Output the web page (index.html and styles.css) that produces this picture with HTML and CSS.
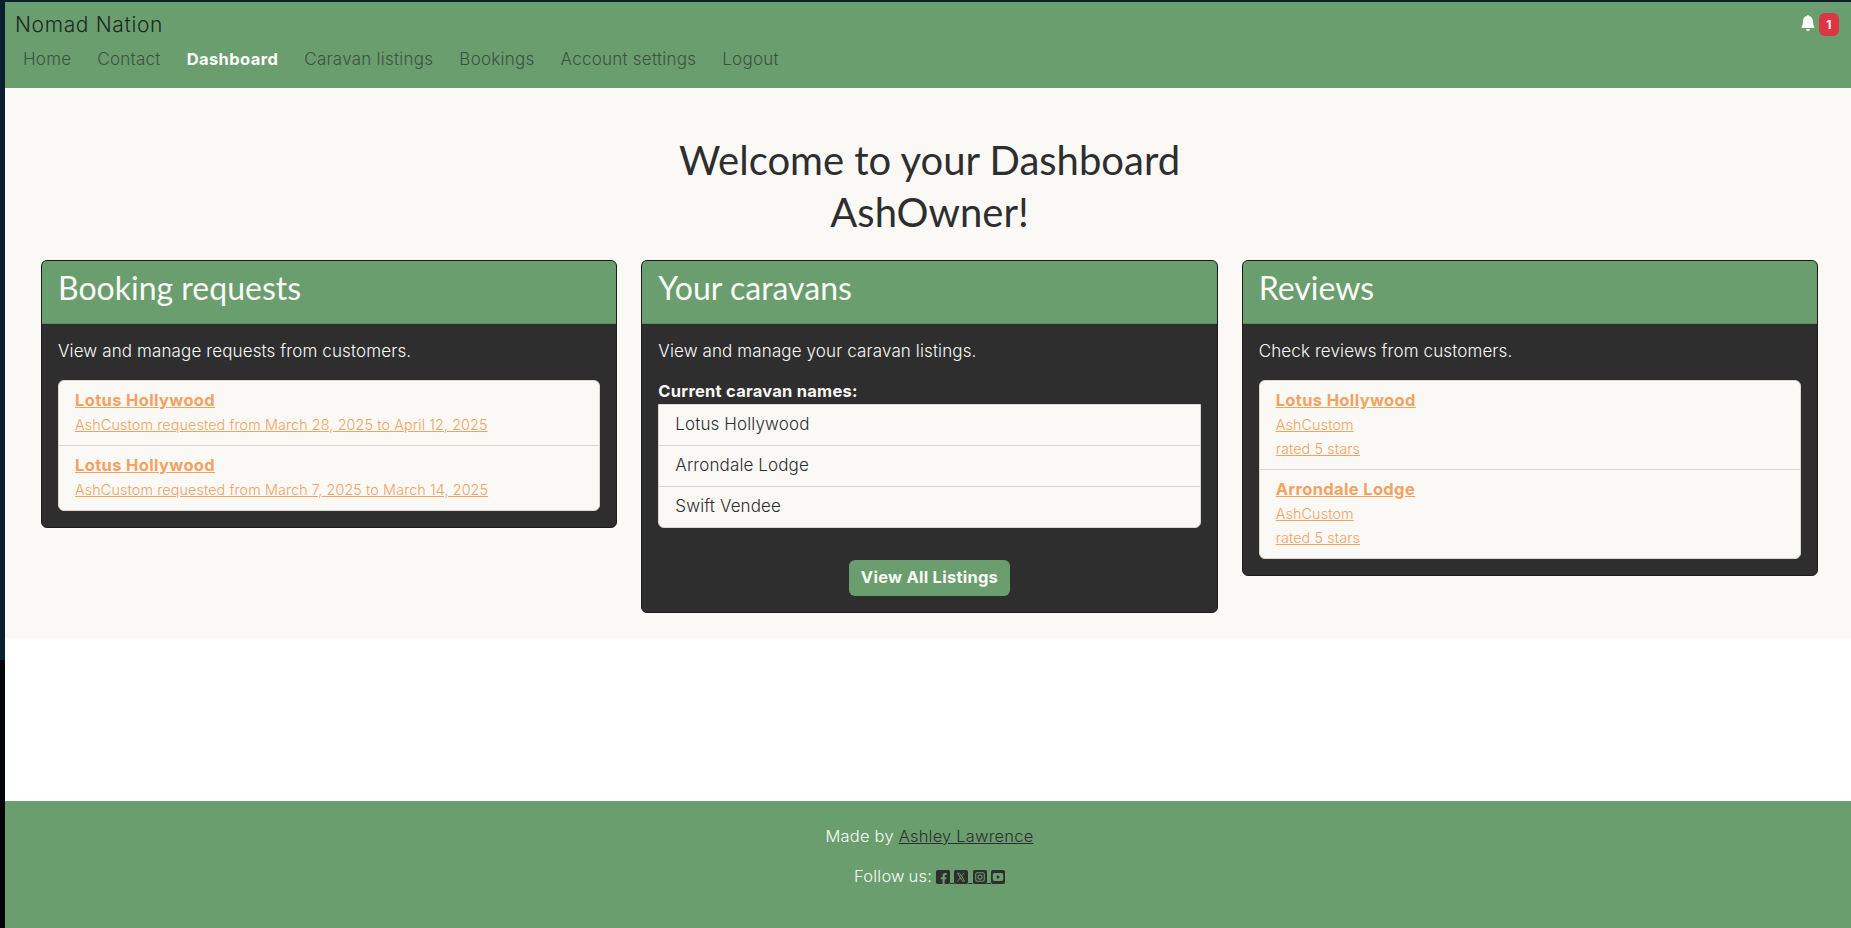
FILE: index.html
```html
<!DOCTYPE html>
<html lang="en">
<head>
  <meta charset="UTF-8" />
  <meta name="viewport" content="width=device-width, initial-scale=1.0"/>
  <title>Nomad Nation</title>
  <link rel="stylesheet" href="styles.css">
</head>
<body>
  <div class="page">
    <header class="navbar">
      <div class="nav-left">
        <a class="brand" href="#">Nomad Nation</a>
        <nav class="nav-links">
          <a href="#">Home</a>
          <a href="#">Contact</a>
          <a href="#" class="active">Dashboard</a>
          <a href="#">Caravan listings</a>
          <a href="#">Bookings</a>
          <a href="#">Account settings</a>
          <a href="#">Logout</a>
        </nav>
      </div>
      <div class="notify">
        <svg class="bell" viewBox="0 0 16 16" aria-hidden="true"><path d="M8 16a2 2 0 0 0 2-2H6a2 2 0 0 0 2 2zm.995-14.901a1 1 0 1 0-1.99 0A5.002 5.002 0 0 0 3 6c0 1.098-.5 6-2 7h14c-1.5-1-2-5.902-2-7 0-2.42-1.72-4.44-4.005-4.901z"/></svg>
        <span class="badge">1</span>
      </div>
    </header>

    <main class="main">
      <h1 class="welcome">Welcome to your Dashboard<br>AshOwner!</h1>
      <div class="cards">
        <section class="card">
          <h2 class="card-header">Booking requests</h2>
          <div class="card-body">
            <p class="card-text">View and manage requests from customers.</p>
            <ul class="list">
              <li>
                <a class="item-title" href="#">Lotus Hollywood</a>
                <a class="item-line" href="#">AshCustom requested from March 28, 2025 to April 12, 2025</a>
              </li>
              <li>
                <a class="item-title" href="#">Lotus Hollywood</a>
                <a class="item-line" href="#">AshCustom requested from March 7, 2025 to March 14, 2025</a>
              </li>
            </ul>
          </div>
        </section>

        <section class="card">
          <h2 class="card-header">Your caravans</h2>
          <div class="card-body">
            <p class="card-text">View and manage your caravan listings.</p>
            <p class="names-label">Current caravan names:</p>
            <ul class="list names">
              <li>Lotus Hollywood</li>
              <li>Arrondale Lodge</li>
              <li>Swift Vendee</li>
            </ul>
            <div class="btn-row"><a class="btn" href="#">View All Listings</a></div>
          </div>
        </section>

        <section class="card">
          <h2 class="card-header">Reviews</h2>
          <div class="card-body">
            <p class="card-text">Check reviews from customers.</p>
            <ul class="list">
              <li>
                <a class="item-title" href="#">Lotus Hollywood</a>
                <a class="item-line" href="#">AshCustom</a>
                <a class="item-line" href="#">rated 5 stars</a>
              </li>
              <li>
                <a class="item-title" href="#">Arrondale Lodge</a>
                <a class="item-line" href="#">AshCustom</a>
                <a class="item-line" href="#">rated 5 stars</a>
              </li>
            </ul>
          </div>
        </section>
      </div>
    </main>

    <footer class="footer">
      <p>Made by <a href="#">Ashley Lawrence</a></p>
      <p class="follow">Follow us:
        <a href="#"><svg viewBox="0 0 16 16"><path d="M2 0a2 2 0 0 0-2 2v12a2 2 0 0 0 2 2h5.500v-5.500H5.600V8.200h1.900V6.600c0-2 1.200-3.100 3-3.100.9 0 1.700.1 1.700.1v2h-1c-1 0-1.300.6-1.300 1.200v1.400h2.200l-.4 2.300H9.900V16H14a2 2 0 0 0 2-2V2a2 2 0 0 0-2-2z"/></svg> </a><a href="#"><svg viewBox="0 0 16 16"><path d="M2 0a2 2 0 0 0-2 2v12a2 2 0 0 0 2 2h12a2 2 0 0 0 2-2V2a2 2 0 0 0-2-2zm1.200 3h3.200l2.200 3.100L11.300 3h1L9.100 6.700 12.800 13H9.600L7.200 9.600 4.300 13h-1l3.400-4zm1.400.8 5.400 8.400h1.300L5.900 3.800z"/></svg> </a><a href="#"><svg viewBox="0 0 16 16"><path fill-rule="evenodd" d="M2 0a2 2 0 0 0-2 2v12a2 2 0 0 0 2 2h12a2 2 0 0 0 2-2V2a2 2 0 0 0-2-2zm3.200 2.500h5.600a2.700 2.700 0 0 1 2.700 2.700v5.600a2.700 2.700 0 0 1-2.700 2.700H5.200a2.700 2.700 0 0 1-2.700-2.700V5.200a2.700 2.700 0 0 1 2.700-2.700zm0 1.200a1.500 1.500 0 0 0-1.500 1.500v5.600a1.500 1.500 0 0 0 1.500 1.500h5.600a1.500 1.500 0 0 0 1.500-1.500V5.200a1.500 1.500 0 0 0-1.500-1.500zM8 5a3 3 0 1 1 0 6 3 3 0 0 1 0-6zm0 1.200a1.800 1.800 0 1 0 0 3.600 1.800 1.800 0 0 0 0-3.600z"/></svg> </a><a href="#"><svg viewBox="0 0 16 16"><path fill-rule="evenodd" d="M2 0a2 2 0 0 0-2 2v12a2 2 0 0 0 2 2h12a2 2 0 0 0 2-2V2a2 2 0 0 0-2-2zm2 3.500h8a2 2 0 0 1 2 2v5a2 2 0 0 1-2 2H4a2 2 0 0 1-2-2v-5a2 2 0 0 1 2-2zM6.700 5.800v4.400L10.500 8z"/></svg></a>
      </p>
    </footer>
  </div>
</body>
</html>
```

FILE: styles.css
```css
body {
  margin: 0;
  padding: 2px 0 0 5px;
  background: linear-gradient(#0a1f2e, #0a1f2e 660px, #02040a 660px);
  font-family: Inter, "Open Sans", sans-serif;
  font-size: 17px;
  font-weight: 350;
  line-height: 24px;
  letter-spacing: .12px;
  color: #2e2e2e;
}
a {
  color: inherit;
}
.page {
  min-height: 926px;
  display: flex;
  flex-direction: column;
  background-color: #fff;
}

/* navbar */
.navbar {
  display: flex;
  justify-content: space-between;
  align-items: flex-start;
  height: 86px;
  padding: 8px 12px 0 10px;
  box-sizing: border-box;
  background-color: #6a9e6f;
}
.brand {
  display: block;
  font-size: 21px;
  line-height: 30px;
  letter-spacing: .65px;
  color: #1c2a1e;
  text-decoration: none;
}
.nav-links {
  display: flex;
  margin-top: -1px;
}
.nav-links a {
  padding: 8px;
  margin-right: 10px;
  letter-spacing: .25px;
  color: #3a533d;
  text-decoration: none;
}
.nav-links a.active {
  color: #fff;
  font-size: 16.5px;
  font-weight: 700;
  letter-spacing: .4px;
}
.notify {
  display: flex;
  align-items: flex-start;
  gap: 3px;
}
.bell {
  width: 16px;
  height: 16px;
  margin-top: 5px;
  fill: #faf9f6;
}
.badge {
  width: 20px;
  height: 23px;
  margin-top: 3px;
  border-radius: 6px;
  background-color: #dc3545;
  color: #fff;
  font-size: 12px;
  font-weight: 700;
  line-height: 23px;
  text-align: center;
}

/* main */
.main {
  background-color: #faf9f6;
  height: 550px;
  padding: 46px 33px 0 36px;
  box-sizing: border-box;
}
.welcome {
  margin: 0 0 22px;
  font-family: Lato, sans-serif;
  font-size: 40px;
  font-weight: 400;
  line-height: 52px;
  letter-spacing: 0;
  text-align: center;
  color: #2e2e2e;
}
.cards {
  display: grid;
  grid-template-columns: repeat(3, 1fr);
  gap: 24px;
  align-items: start;
}
.card {
  border: 1px solid #1c1c1c;
  border-radius: 6px;
  overflow: hidden;
  background-color: #2e2e2e;
  color: #faf9f6;
}
.card-header {
  margin: 0;
  height: 63px;
  padding: 8px 16px;
  box-sizing: border-box;
  background-color: #6a9e6f;
  border-bottom: 1px solid #5d8a62;
  font-family: Lato, sans-serif;
  font-size: 32px;
  font-weight: 400;
  line-height: 38px;
  letter-spacing: 0;
  color: #faf9f6;
}
.card-body {
  padding: 15px 16px 16px;
}
.card-text {
  margin: 0 0 17px;
}
.card-text + .list {
  margin-top: 1px;
}
.names-label {
  margin: -1px 0 1px;
  font-size: 16.5px;
  font-weight: 700;
  letter-spacing: .25px;
}
.list {
  margin: 0;
  padding: 0;
  list-style: none;
  background-color: #faf9f6;
  border: 1px solid #d9d7d3;
  border-radius: 6px;
  color: #2e2e2e;
}
.list li {
  padding: 7px 16px 9px;
  border-bottom: 1px solid #d9d7d3;
}
.list li:last-child {
  border-bottom: 0;
}
.names {
  border-radius: 0 0 6px 6px;
}
.item-title {
  display: block;
  width: fit-content;
  font-size: 16.5px;
  font-weight: 700;
  letter-spacing: .35px;
  color: #f4a261;
}
.item-line {
  display: block;
  width: fit-content;
  margin-top: 1px;
  margin-bottom: -1px;
  font-size: 14.4px;
  letter-spacing: .09px;
  color: #f4a261;
}
.btn-row {
  display: flex;
  justify-content: center;
  margin-top: 32px;
}
.btn {
  padding: 5px 12px 7px;
  border-radius: 6px;
  background-color: #6a9e6f;
  color: #faf9f6;
  font-size: 16.5px;
  font-weight: 700;
  letter-spacing: .25px;
  text-decoration: none;
}

/* footer */
.footer {
  margin-top: 163px;
  height: 127px;
  padding: 23px 0 0 3px;
  box-sizing: border-box;
  background-color: #6a9e6f;
  color: #faf9f6;
  font-size: 16.5px;
  letter-spacing: .2px;
  text-align: center;
}
.footer p {
  margin: 0 0 16px;
}
.footer a {
  color: #2e2e2e;
}
.follow {
  word-spacing: -1px;
}
.follow a {
  word-spacing: -.5px;
}
.follow svg {
  width: 14px;
  height: 14px;
  vertical-align: -2px;
  fill: #2e2e2e;
}
```
